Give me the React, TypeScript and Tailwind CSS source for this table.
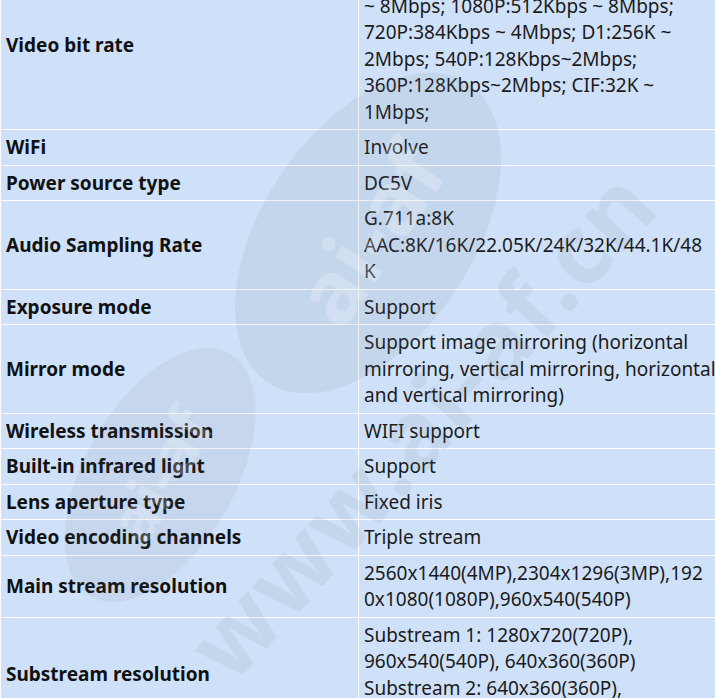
import type { ReactNode } from "react"

type Spec = { label: string; lines: string[] }

const specs: Spec[] = [
  {
    label: "Video bit rate",
    lines: [
      "H.265: 4MP:512Kbps ~ 8Mbps; 3MP:512Kbps",
      "~ 8Mbps; 1080P:512Kbps ~ 8Mbps;",
      "720P:384Kbps ~ 4Mbps; D1:256K ~",
      "2Mbps; 540P:128Kbps~2Mbps;",
      "360P:128Kbps~2Mbps; CIF:32K ~",
      "1Mbps;",
    ],
  },
  { label: "WiFi", lines: ["Involve"] },
  { label: "Power source type", lines: ["DC5V"] },
  {
    label: "Audio Sampling Rate",
    lines: ["G.711a:8K", "AAC:8K/16K/22.05K/24K/32K/44.1K/48", "K"],
  },
  { label: "Exposure mode", lines: ["Support"] },
  {
    label: "Mirror mode",
    lines: [
      "Support image mirroring (horizontal",
      "mirroring, vertical mirroring, horizontal",
      "and vertical mirroring)",
    ],
  },
  { label: "Wireless transmission", lines: ["WIFI support"] },
  { label: "Built-in infrared light", lines: ["Support"] },
  { label: "Lens aperture type", lines: ["Fixed iris"] },
  { label: "Video encoding channels", lines: ["Triple stream"] },
  {
    label: "Main stream resolution",
    lines: ["2560x1440(4MP),2304x1296(3MP),192", "0x1080(1080P),960x540(540P)"],
  },
  {
    label: "Substream resolution",
    lines: [
      "Substream 1: 1280x720(720P),",
      "960x540(540P), 640x360(360P)",
      "Substream 2: 640x360(360P),",
      "320x180(180P)",
    ],
  },
]

function Lines({ lines }: { lines: string[] }) {
  const out: ReactNode[] = []
  lines.forEach((l, i) => {
    if (i > 0) out.push(<br key={`b${i}`} />)
    out.push(l)
  })
  return <>{out}</>
}

// faint site watermark drawn over the table
function Watermark() {
  return (
    <div aria-hidden className="pointer-events-none absolute inset-0 select-none overflow-hidden">
      <div className="absolute left-[188px] top-[128px] flex h-[210px] w-[360px] -rotate-[56deg] items-center justify-center rounded-[50%] bg-[rgba(110,115,125,0.1)]">
        <span className="text-[88px] font-bold leading-none text-[rgba(255,255,255,0.22)]">ai-af</span>
      </div>
      <div className="absolute left-[20px] top-[400px] flex h-[150px] w-[280px] -rotate-[60deg] items-center justify-center rounded-[50%] bg-[rgba(110,115,125,0.09)]">
        <span className="text-[64px] font-bold leading-none text-[rgba(255,255,255,0.22)]">ai-af</span>
      </div>
      <div className="absolute left-[40px] top-[375px] w-[760px] -rotate-[48deg] text-center text-[96px] font-bold leading-none tracking-[2px] text-[rgba(110,115,125,0.1)]">
        www.ai-af.cn
      </div>
    </div>
  )
}

export default function App() {
  return (
    <div className="relative h-[698px] w-[715px] overflow-hidden bg-[#cfe1f9] font-['Noto_Sans',sans-serif] text-[19px] leading-[26.5px] text-[#1b1b1b]">
      <table className="-mt-[39px] w-[716px] table-fixed border-collapse">
        <colgroup>
          <col className="w-[358px]" />
          <col />
        </colgroup>
        <tbody>
          {specs.map((s) => (
            <tr key={s.label}>
              <td className="border border-white px-[5px] py-[4px] align-middle font-bold text-[#111]">
                {s.label}
              </td>
              <td className="whitespace-nowrap border border-white px-[5px] py-[4px] align-top">
                <Lines lines={s.lines} />
              </td>
            </tr>
          ))}
        </tbody>
      </table>
      <Watermark />
    </div>
  )
}
